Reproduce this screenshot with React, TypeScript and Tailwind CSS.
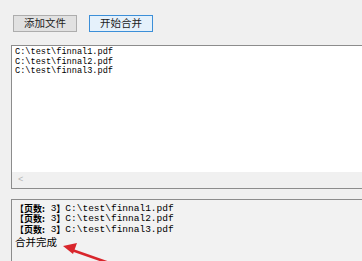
import React from "react";

const files = ["C:\\test\\finnal1.pdf", "C:\\test\\finnal2.pdf", "C:\\test\\finnal3.pdf"];

export default function App() {
  return (
    <div className="relative w-[362px] h-[261px] overflow-hidden bg-[#f0f0f0] text-black">
      {/* toolbar */}
      <div className="flex gap-[12px] pl-[13px] pt-[15px] font-['Noto_Sans_CJK_SC','Liberation_Sans',sans-serif]">
        <button className="w-[64px] h-[17px] flex items-center justify-center border border-[#adadad] bg-[#e1e1e1] text-[10.5px] leading-none text-[#222]">
          添加文件
        </button>
        <button className="w-[64px] h-[17px] flex items-center justify-center border border-[#3c8fd8] bg-[#e5f1fb] text-[10.5px] leading-none text-[#222]">
          开始合并
        </button>
      </div>

      {/* file list */}
      <div className="ml-[11px] mt-[13px] w-[400px] h-[144px] flex flex-col border-l border-t border-b border-[#8c8c8c]">
        <div className="flex-1 bg-white pl-[3px] pt-[2px] font-['Liberation_Mono',monospace] text-[8.6px] leading-[9.7px]">
          {files.map((f) => (
            <div key={f}>{f}</div>
          ))}
        </div>
        <div className="h-[16px] flex items-center bg-[#f0f0f0] pl-[6px]">
          <span className="font-['Liberation_Mono',monospace] text-[9px] leading-none text-[#b5b5b5]">&lt;</span>
        </div>
      </div>

      {/* log output */}
      <div className="ml-[11px] mt-[10px] w-[400px] h-[80px] border-l border-t border-[#8c8c8c] bg-[#f2f2f2] pl-[3px] pt-[3px]">
        {files.map((f) => (
          <div key={f} className="flex items-center h-[10.5px] whitespace-pre">
            <span className="font-['Noto_Sans_CJK_SC',sans-serif] text-[9px] leading-[9px] font-bold">【页数:</span>
            <span className="font-['Liberation_Mono',monospace] text-[9.5px] leading-[9px]"> 3</span>
            <span className="font-['Noto_Sans_CJK_SC',sans-serif] text-[9px] leading-[9px] font-bold">】</span>
            <span className="font-['Liberation_Mono',monospace] text-[9.5px] leading-[9px]">{f}</span>
          </div>
        ))}
        <div className="mt-[1px] font-['Noto_Sans_CJK_SC',sans-serif] text-[10.5px] leading-[12px]">合并完成</div>
      </div>

      {/* red annotation arrow */}
      <svg className="absolute left-0 top-0" width="362" height="261" viewBox="0 0 362 261">
        <line x1="112" y1="264" x2="72" y2="250" stroke="#d9262c" strokeWidth="2.6" strokeLinecap="round" />
        <polygon points="63,246 77,243 73,254" fill="#d9262c" />
      </svg>
    </div>
  );
}
